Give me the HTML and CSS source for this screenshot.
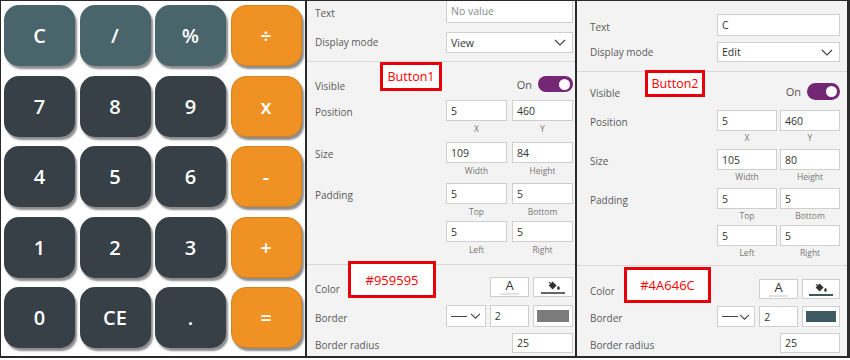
FILE: index.html
```html
<!DOCTYPE html>
<html>
<head>
<meta charset="utf-8">
<link rel="stylesheet" href="styles.css">
</head>
<body>
<div class="frame">
  <div class="calc">
    <div class="key fn">C</div><div class="key fn">/</div><div class="key fn">%</div><div class="key op">÷</div>
    <div class="key num">7</div><div class="key num">8</div><div class="key num">9</div><div class="key op">x</div>
    <div class="key num">4</div><div class="key num">5</div><div class="key num">6</div><div class="key op">-</div>
    <div class="key num">1</div><div class="key num">2</div><div class="key num">3</div><div class="key op">+</div>
    <div class="key num">0</div><div class="key num">CE</div><div class="key num">.</div><div class="key op">=</div>
  </div>

  <section class="panel panel-a">
    <div class="group group-top">
      <div class="row r-text"><span class="lbl">Text</span><div class="field"><div class="inp full ph">No value</div></div></div>
      <div class="row r-mode"><span class="lbl">Display mode</span><div class="field"><div class="inp full select"><span>View</span><svg class="chev" width="12" height="7" viewBox="0 0 12 7"><path d="M1 1l5 5 5-5" fill="none" stroke="#444" stroke-width="1.2"/></svg></div></div></div>
    </div>
    <div class="group group-mid">
      <div class="row r-vis"><span class="lbl">Visible</span><div class="field end"><span class="on">On</span><span class="toggle"><span class="knob"></span></span></div></div>
      <div class="row r-pos"><span class="lbl">Position</span><div class="field pair"><div class="cell"><div class="inp">5</div><span class="cap">X</span></div><div class="cell"><div class="inp">460</div><span class="cap">Y</span></div></div></div>
      <div class="row r-size"><span class="lbl">Size</span><div class="field pair"><div class="cell"><div class="inp">109</div><span class="cap">Width</span></div><div class="cell"><div class="inp">84</div><span class="cap">Height</span></div></div></div>
      <div class="row r-pad1"><span class="lbl">Padding</span><div class="field pair"><div class="cell"><div class="inp">5</div><span class="cap">Top</span></div><div class="cell"><div class="inp">5</div><span class="cap">Bottom</span></div></div></div>
      <div class="row r-pad2"><span class="lbl"></span><div class="field pair"><div class="cell"><div class="inp">5</div><span class="cap">Left</span></div><div class="cell"><div class="inp">5</div><span class="cap">Right</span></div></div></div>
    </div>
    <div class="group group-bot">
      <div class="row r-color"><span class="lbl">Color</span><div class="field end trio">
        <div class="inp mini btn"><span class="a-ico">A</span></div>
        <div class="inp mini btn bucket"><svg width="15" height="11" viewBox="0 0 15 11"><path d="M2.6 5.6 6.6 1.6 10.6 5.6 6.6 9.6 Z" fill="#333"/><path d="M4.6 3.6 3.2 2.2" stroke="#333" stroke-width="1.3"/><path d="M12.5 5.8c1 1.3 1.3 2 1.3 2.6a1.3 1.3 0 0 1-2.6 0c0-.6.3-1.3 1.3-2.6z" fill="#333"/></svg><span class="bar"></span></div>
      </div></div>
      <div class="row r-border"><span class="lbl">Border</span><div class="field trio">
        <div class="inp mini bsel"><svg width="16" height="3" viewBox="0 0 16 3"><path d="M0 1.5h16" stroke="#444" stroke-width="1"/></svg><svg class="chev" width="11" height="6" viewBox="0 0 11 6"><path d="M1 .8l4.5 4.4L10 .8" fill="none" stroke="#444" stroke-width="1.1"/></svg></div>
        <div class="inp mini">2</div>
        <div class="inp mini swatch"><span class="sw"></span></div>
      </div></div>
      <div class="row r-radius"><span class="lbl">Border radius</span><div class="field end"><div class="inp cellw">25</div></div></div>
    </div>
    <div class="note note-a1">Button1</div>
    <div class="note note-a2">#959595</div>
  </section>

  <section class="panel panel-b">
    <div class="group group-top">
      <div class="row r-text"><span class="lbl">Text</span><div class="field"><div class="inp full">C</div></div></div>
      <div class="row r-mode"><span class="lbl">Display mode</span><div class="field"><div class="inp full select"><span>Edit</span><svg class="chev" width="12" height="7" viewBox="0 0 12 7"><path d="M1 1l5 5 5-5" fill="none" stroke="#444" stroke-width="1.2"/></svg></div></div></div>
    </div>
    <div class="group group-mid">
      <div class="row r-vis"><span class="lbl">Visible</span><div class="field end"><span class="on">On</span><span class="toggle"><span class="knob"></span></span></div></div>
      <div class="row r-pos"><span class="lbl">Position</span><div class="field pair"><div class="cell"><div class="inp">5</div><span class="cap">X</span></div><div class="cell"><div class="inp">460</div><span class="cap">Y</span></div></div></div>
      <div class="row r-size"><span class="lbl">Size</span><div class="field pair"><div class="cell"><div class="inp">105</div><span class="cap">Width</span></div><div class="cell"><div class="inp">80</div><span class="cap">Height</span></div></div></div>
      <div class="row r-pad1"><span class="lbl">Padding</span><div class="field pair"><div class="cell"><div class="inp">5</div><span class="cap">Top</span></div><div class="cell"><div class="inp">5</div><span class="cap">Bottom</span></div></div></div>
      <div class="row r-pad2"><span class="lbl"></span><div class="field pair"><div class="cell"><div class="inp">5</div><span class="cap">Left</span></div><div class="cell"><div class="inp">5</div><span class="cap">Right</span></div></div></div>
    </div>
    <div class="group group-bot">
      <div class="row r-color"><span class="lbl">Color</span><div class="field end trio">
        <div class="inp mini btn"><span class="a-ico">A</span></div>
        <div class="inp mini btn bucket"><svg width="15" height="11" viewBox="0 0 15 11"><path d="M2.6 5.6 6.6 1.6 10.6 5.6 6.6 9.6 Z" fill="#333"/><path d="M4.6 3.6 3.2 2.2" stroke="#333" stroke-width="1.3"/><path d="M12.5 5.8c1 1.3 1.3 2 1.3 2.6a1.3 1.3 0 0 1-2.6 0c0-.6.3-1.3 1.3-2.6z" fill="#333"/></svg><span class="bar"></span></div>
      </div></div>
      <div class="row r-border"><span class="lbl">Border</span><div class="field trio">
        <div class="inp mini bsel"><svg width="16" height="3" viewBox="0 0 16 3"><path d="M0 1.5h16" stroke="#444" stroke-width="1"/></svg><svg class="chev" width="11" height="6" viewBox="0 0 11 6"><path d="M1 .8l4.5 4.4L10 .8" fill="none" stroke="#444" stroke-width="1.1"/></svg></div>
        <div class="inp mini">2</div>
        <div class="inp mini swatch"><span class="sw"></span></div>
      </div></div>
      <div class="row r-radius"><span class="lbl">Border radius</span><div class="field end"><div class="inp cellw">25</div></div></div>
    </div>
    <div class="note note-b1">Button2</div>
    <div class="note note-b2">#4A646C</div>
  </section>
</div>
</body>
</html>
```

FILE: styles.css
```css
* { box-sizing: border-box; margin: 0; padding: 0; }
html, body { background: #fff; width: 850px; height: 360px; overflow: hidden; }

.frame {
  display: flex;
  width: 850px;
  height: 358px;
  border: 1px solid #2a2a2a;
  border-right-width: 3px;
  border-bottom-width: 2px;
  overflow: hidden;
}

/* calculator */
.calc {
  flex: 0 0 304px;
  background: #fff;
  display: grid;
  grid-template-columns: repeat(4, 71px);
  grid-auto-rows: 61px;
  column-gap: 4.5px;
  row-gap: 9.5px;
  padding: 4px 0 0 3px;
  align-content: start;
}
.key {
  border-radius: 15px;
  color: #fff;
  font: 600 20px "Open Sans", "Noto Sans", sans-serif;
  display: flex;
  align-items: center;
  justify-content: center;
  box-shadow: 2px 3px 2px rgba(0, 0, 0, .45);
}
.key.fn { background: #4a646c; }
.key.num { background: #373f47; }
.key.op { background: #ef9223; border: 1px solid #d9831c; }

/* panels */
.panel {
  position: relative;
  flex: 0 0 auto;
  background: #f3f3f3;
  border-left: 2px solid #2a2a2a;
  overflow: hidden;
  font-family: "Open Sans", "Noto Sans", sans-serif;
  color: #555;
  padding-left: var(--pl);
}
.panel-a {
  width: 270px;
  --pl: 8px; --lw: 131px; --fw: 127px; --cg: 5px;
  --t-h: 24px; --t-m: -2px; --m-h: 21px; --m-m: 9px; --sep1: 8px;
  --v-h: 16px; --v-m: 14px; --tw: 35px;
  --pos-m: 8px; --size-m: 7px; --pad-m: 6px; --pad2-m: 3px; --cap-m: 2px; --sep2: 8px;
  --c-m: 12px; --b-h: 22px; --b-m: 8px; --r-m: 6px;
  --fill: #666; --swc: #7b7b7b;
}
.panel-b {
  width: 272px;
  --pl: 13px; --lw: 127px; --fw: 123px; --cg: 3px;
  --t-h: 22px; --t-m: 13px; --m-h: 20px; --m-m: 6px; --sep1: 9px;
  --v-h: 17px; --v-m: 11px; --tw: 33px;
  --pos-m: 10px; --size-m: 5px; --pad-m: 5px; --pad2-m: 3px; --cap-m: 1px; --sep2: 6px;
  --c-m: 13px; --b-h: 21px; --b-m: 7px; --r-m: 6px;
  --fill: #3d575e; --swc: #3f5a61;
}

.group-top { padding-bottom: var(--sep1); border-bottom: 1px solid #d9d9d9; margin-left: calc(-1 * var(--pl)); padding-left: var(--pl); }
.group-mid { padding-bottom: var(--sep2); border-bottom: 1px solid #d9d9d9; margin-left: calc(-1 * var(--pl)); padding-left: var(--pl); }

.row { display: flex; align-items: flex-start; --h: 21px; }
.lbl {
  flex: 0 0 var(--lw);
  height: var(--h);
  font-size: 10px;
  color: #5a5a5a;
  line-height: var(--h);
  padding-top: 2px;
  white-space: nowrap;
}
.field { width: var(--fw); display: flex; }
.field.end { justify-content: flex-end; align-items: center; }
.field.pair { gap: var(--cg); }
.field.trio { gap: 4px; }

.inp {
  background: #fff;
  border: 1px solid #cfcfcf;
  height: var(--h);
  font-size: 10.5px;
  color: #333;
  padding-left: 4px;
  display: flex;
  align-items: center;
}
.inp.full { width: 100%; }
.inp.ph { color: #8a8a8a; }

.r-text { margin-top: var(--t-m); --h: var(--t-h); }
.r-mode { margin-top: var(--m-m); --h: var(--m-h); }
.r-mode .lbl { padding-top: 0; }
.select { justify-content: space-between; padding-right: 6px; }

.r-vis { margin-top: var(--v-m); --h: var(--v-h); }
.r-vis .field { height: var(--h); }
.on { font-size: 11px; color: #555; margin-right: 6px; }
.toggle {
  width: var(--tw);
  height: var(--h);
  border-radius: 9px;
  background: #742774;
  display: flex;
  align-items: center;
  justify-content: flex-end;
  padding-right: 3px;
}
.knob { width: 11px; height: 11px; border-radius: 50%; background: #fff; }

.r-pos { margin-top: var(--pos-m); }
.r-size { margin-top: var(--size-m); }
.r-pad1 { margin-top: var(--pad-m); }
.r-pad2 { margin-top: var(--pad2-m); }
.cell { flex: 1; display: flex; flex-direction: column; align-items: stretch; }
.cap {
  margin-top: var(--cap-m);
  font-size: 8.5px;
  line-height: 12px;
  color: #777;
  text-align: center;
}

.r-color { margin-top: var(--c-m); --h: 20px; }
.r-border { margin-top: var(--b-m); --h: var(--b-h); }
.r-radius { margin-top: var(--r-m); --h: 20px; }

.mini { width: calc((var(--fw) - 8px) / 3); flex: 0 0 auto; }
.cellw { width: calc((var(--fw) - var(--cg)) / 2); }
.btn { justify-content: center; padding-left: 0; flex-direction: column; }
.a-ico {
  font-size: 13px;
  line-height: 13px;
  color: #333;
  padding: 0 5px 1px;
  border-bottom: 2px solid #e2e2e2;
}
.bucket svg { display: block; margin-bottom: 1px; }
.bar { width: 24px; height: 2px; background: var(--fill); }
.bsel { justify-content: space-between; padding: 0 4px 0 4px; }
.swatch { padding: 4px 3px; }
.sw { flex: 1; align-self: stretch; background: var(--swc); }

/* annotations */
.note {
  position: absolute;
  border: 3px solid #e6000a;
  background: #fff;
  color: #f00;
  font-size: 12.5px;
  display: flex;
  align-items: center;
  justify-content: center;
}
.note-a1 { left: 73px; top: 61px; width: 62px; height: 29px; }
.note-a2 { left: 41px; top: 260px; width: 88px; height: 37px; font-size: 13px; }
.note-b1 { left: 68px; top: 69px; width: 60px; height: 27px; }
.note-b2 { left: 47px; top: 266px; width: 87px; height: 36px; font-size: 13px; }
```
